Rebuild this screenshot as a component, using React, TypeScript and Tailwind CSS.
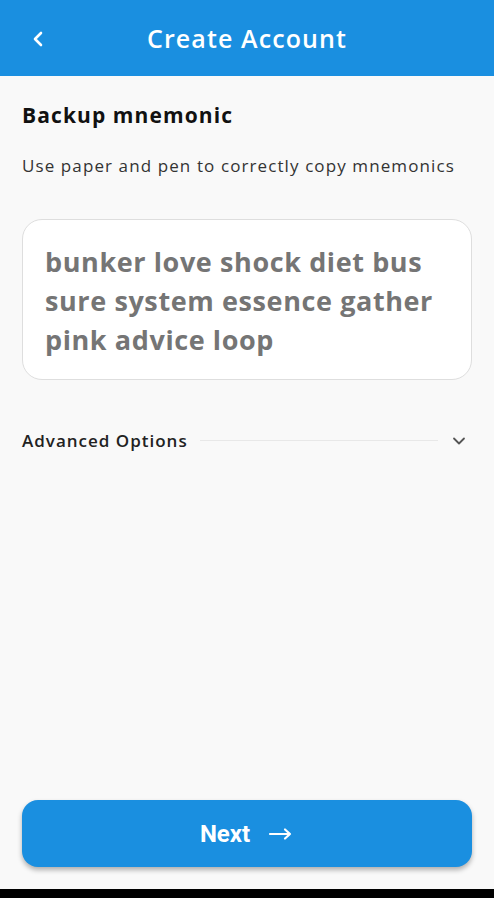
import React from "react";

const words = "bunker love shock diet bus sure system essence gather pink advice loop";

const App = () => {
  return (
    <div
      className="flex flex-col h-[898px] w-full bg-[#f9f9f9]"
      style={{ fontFamily: "'Open Sans', 'Noto Sans', sans-serif" }}
    >
      {/* header */}
      <div className="relative flex items-center justify-center h-[76px] bg-[#1a8fe0] shrink-0">
        <button className="absolute left-[28px] top-[28px] text-white">
          <svg width="20" height="22" viewBox="0 0 20 22" fill="none">
            <path d="M13 5 L7 11 L13 17" stroke="white" strokeWidth="2.6" strokeLinecap="round" strokeLinejoin="round" />
          </svg>
        </button>
        <h1 className="text-white text-[25px] font-semibold tracking-[1.1px] mt-[2px]">Create Account</h1>
      </div>

      {/* content */}
      <div className="flex-1 flex flex-col px-[22px]">
        <p className="mt-[29px] text-[21px] font-bold text-[#111] leading-none tracking-[1.1px]">Backup mnemonic</p>
        <p className="mt-[31px] text-[17px] text-[#333] leading-none tracking-[1.1px]">
          Use paper and pen to correctly copy mnemonics
        </p>
        <div className="mt-[45px] h-[161px] rounded-[20px] border border-[#dedede] bg-white px-[22px] pt-[22px]">
          <p className="text-[27px] font-bold text-[#757575] leading-[39px] tracking-[0.6px]">{words}</p>
        </div>
        <div className="mt-[48px] flex items-center">
          <span className="text-[17px] font-semibold text-[#222] tracking-[1px]">Advanced Options</span>
          <div className="flex-1 h-px bg-[#e8e8e8] ml-[12px] mr-[12px]" />
          <svg width="18" height="18" viewBox="0 0 18 18" fill="none" className="mr-[4px]">
            <path d="M4 6.5 L9 11.5 L14 6.5" stroke="#555" strokeWidth="1.8" strokeLinecap="round" strokeLinejoin="round" />
          </svg>
        </div>
      </div>

      {/* bottom button */}
      <div className="px-[22px] pb-[22px] shrink-0">
        <button className="w-full h-[67px] rounded-[16px] bg-[#1a8fe0] shadow-[0_3px_5px_rgba(0,0,0,0.3)] flex items-center justify-center gap-[18px] text-white">
          <span className="text-[24px] font-bold" style={{ fontFamily: "Roboto, sans-serif" }}>Next</span>
          <svg width="26" height="14" viewBox="0 0 26 14" fill="none">
            <path d="M2 7 H22 M17 2.5 L22 7 L17 11.5" stroke="white" strokeWidth="2.2" strokeLinecap="round" strokeLinejoin="round" />
          </svg>
        </button>
      </div>
      <div className="h-[9px] bg-black shrink-0" />
    </div>
  );
};

export default App;
